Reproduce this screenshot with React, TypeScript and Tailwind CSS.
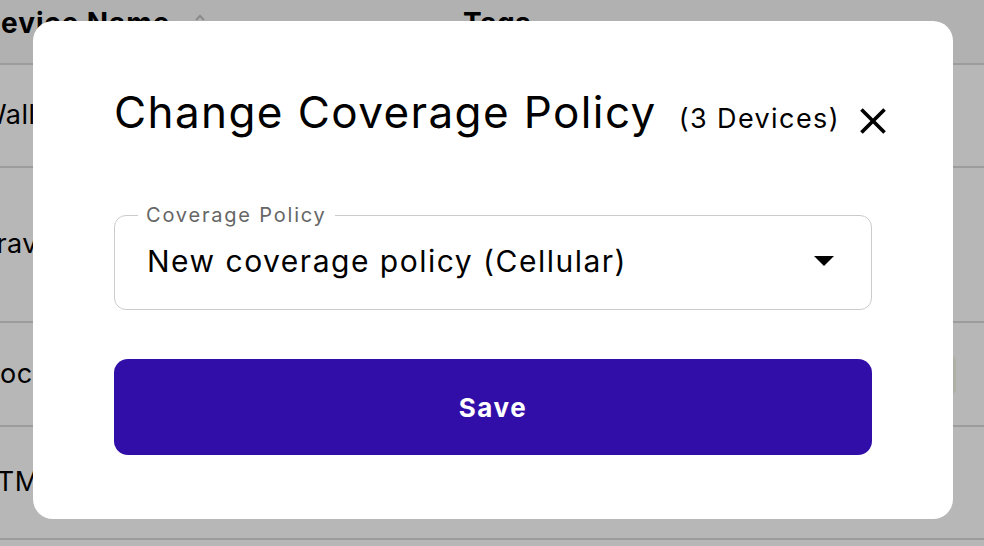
import React from "react";

const rows = [
  { name: "Wall Unit 04", h: "h-[103px]" },
  { name: "Traveler 12", h: "h-[155px]" },
  { name: "Dock Sensor", h: "h-[104px]" },
  { name: "ATM Lobby", h: "h-[113px]" },
  { name: "Gate", h: "h-[60px]" },
];

function CloseIcon() {
  return (
    <svg viewBox="0 0 24 24" className="w-[44px] h-[44px]" fill="currentColor">
      <path d="M19 6.41 17.59 5 12 10.59 6.41 5 5 6.41 10.59 12 5 17.59 6.41 19 12 13.41 17.59 19 19 17.59 13.41 12z" />
    </svg>
  );
}

export default function App() {
  return (
    <div
      className="relative w-[984px] h-[546px] overflow-hidden bg-[#b7b7b7] text-black"
      style={{ fontFamily: "Inter, 'Noto Sans', sans-serif" }}
    >
      {/* Table behind the dialog */}
      <div className="flex flex-col">
        <div className="h-[65px] bg-[#b1b1b1] border-b-2 border-[#9c9c9c] flex items-start pt-[2px] ml-[-20px]">
          <div className="w-[483px] flex items-start gap-[22px]">
            <span className="text-[28px] font-bold tracking-[0.9px] whitespace-nowrap">Device Name</span>
            <svg viewBox="0 0 24 24" className="mt-[8px] w-[16px] h-[16px] text-[#8a8a8a]" fill="none" stroke="currentColor" strokeWidth="3">
              <path d="M6 15l6-6 6 6" />
            </svg>
          </div>
          <span className="text-[28px] font-bold tracking-[0.5px]">Tags</span>
        </div>
        {rows.map((r) => (
          <div
            key={r.name}
            className={`${r.h} border-b-2 border-[#9c9c9c] flex items-center ml-[-20px]`}
          >
            <span className="text-[27px] tracking-[0.5px] whitespace-nowrap">{r.name}</span>
          </div>
        ))}
      </div>
      <div className="absolute left-[940px] top-[355px] w-[16px] h-[40px] rounded-[6px] bg-[#aeb0a6]" />

      {/* Dialog */}
      <div className="absolute left-[33px] top-[21px] w-[920px] h-[498px] bg-white rounded-[20px] px-[81px] pt-[65px]">
        <div className="flex items-start h-[52px] whitespace-nowrap">
          <h2 className="shrink-0 mt-[4px] text-[44px] leading-none tracking-[1.4px]">Change Coverage Policy</h2>
          <span className="shrink-0 ml-[22px] mt-[13px] text-[27px] tracking-[1.4px]">(3 Devices)</span>
          <button className="shrink-0 ml-[11px] mt-[13px] text-black">
            <CloseIcon />
          </button>
        </div>

        <fieldset className="mt-[67px] h-[105px] border-[1.5px] border-[#cbcbcb] rounded-[12px] px-[22px]">
          <legend className="px-[8px] ml-[1px] text-[20px] leading-none text-[#666] tracking-[1.8px]">Coverage Policy</legend>
          <div className="flex items-center justify-between h-[72px] pl-[10px] pr-[15px]">
            <span className="text-[30px] tracking-[1.5px] whitespace-nowrap">New coverage policy (Cellular)</span>
            <svg viewBox="0 0 20 10" className="w-[20px] h-[10px]" fill="currentColor">
              <path d="M0 0h20L10 10z" />
            </svg>
          </div>
        </fieldset>

        <button className="mt-[49px] w-full h-[96px] rounded-[14px] bg-[#320ea9] text-white text-[26px] font-bold tracking-[1.5px]">
          Save
        </button>
      </div>
    </div>
  );
}
